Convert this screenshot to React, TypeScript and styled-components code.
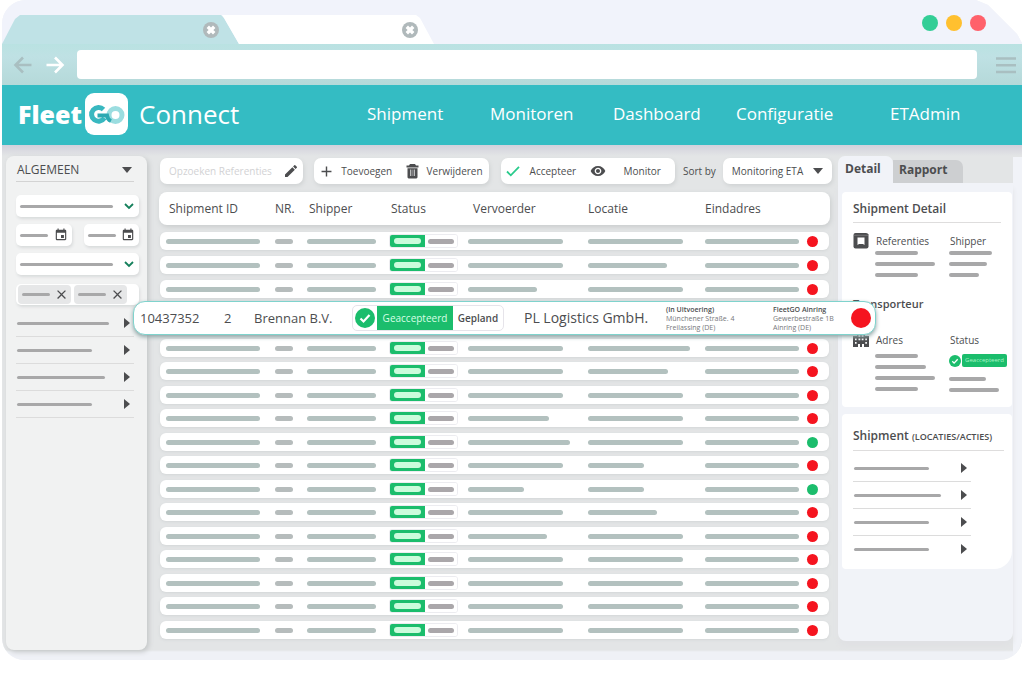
import React from "react";
import styled, { createGlobalStyle } from "styled-components";
import { MdAdd, MdClose, MdEdit, MdEvent, MdVisibility } from "react-icons/md";

const ink = "#4c4d4f";
const green = "#1bbd6c";
const teal = "#34bcc3";

const GlobalStyle = createGlobalStyle`
  *, *::before, *::after { box-sizing: border-box; }
  body { margin: 0; background: #fff; color: ${ink}; font-family: "Open Sans", "Noto Sans", sans-serif; }
  button, input, select { font: inherit; color: inherit; border: 0; padding: 0; margin: 0; background: none; }
  svg { display: block; flex: none; }
  a { color: inherit; text-decoration: none; }
`;

const Window = styled.div`
  margin: 0 2px 22px;
  background: #f1f3f8;
  border-radius: 24px 0 22px 22px;
  overflow: hidden;
  clip-path: polygon(0 0, calc(100% - 46px) 0, calc(100% - 34px) 5px, calc(100% - 5px) 34px, 100% 43px, 100% 100%, 0 100%);
`;

const TabStrip = styled.div`
  display: flex;
  align-items: flex-end;
  height: 44px;
  background: #f1f3fb;
`;

const BrowserTab = styled.div<{ $active?: boolean }>`
  display: flex;
  align-items: center;
  justify-content: flex-end;
  height: 29px;
  width: ${(p) => (p.$active ? 237 : 212)}px;
  margin-left: ${(p) => (p.$active ? 0 : -17)}px;
  padding-right: ${(p) => (p.$active ? 20 : 16)}px;
  background: ${(p) => (p.$active ? "#bfe2e6" : "#fff")};
  clip-path: ${(p) =>
    p.$active
      ? "polygon(0 100%, 13px 4px, 18px 0, calc(100% - 18px) 0, calc(100% - 15px) 3px, 100% 100%)"
      : "polygon(0 0, calc(100% - 18px) 0, calc(100% - 14px) 3px, 100% 100%, 17px 100%, 2px 3px)"};
`;

const PlainButton = styled.button`
  display: flex;
  align-items: center;
  cursor: pointer;
`;

const WindowDots = styled.div`
  display: flex;
  gap: 8px;
  margin: 0 36px 13px auto;
`;

const WindowDot = styled.button<{ $color: string }>`
  width: 16px;
  height: 16px;
  border-radius: 50%;
  background: ${(p) => p.$color};
`;

const AddressRow = styled.div`
  display: flex;
  align-items: center;
  height: 41px;
  padding: 0 6px 0 9px;
  gap: 8px;
  background: linear-gradient(#b9e2e2, #bfe1e4 30%, #b5d9d9);
`;

const Address = styled.input`
  flex: 1;
  height: 29px;
  min-width: 0;
  margin: 0 11px 0 2px;
  padding: 0 12px;
  border-radius: 4px;
  background: #fff;
`;

const Header = styled.header`
  display: flex;
  align-items: center;
  height: 60px;
  padding: 0 0 2px 16px;
  color: #fff;
  background: ${teal};
`;

const Brand = styled.a`
  display: flex;
  align-items: center;
  font-size: 26px;
  line-height: 32px;
`;

const BrandName = styled.span`
  width: 67px;
  font-size: 25px;
  font-weight: 800;
`;

const Product = styled.span`
  margin-left: 11px;
`;

const Nav = styled.nav`
  display: grid;
  flex: 1;
  grid-template-columns: 123fr 123fr 123fr 154fr 71fr;
  max-width: 594px;
  margin-left: auto;
  margin-right: 61px;
  font-size: 17px;
  line-height: 24px;
  white-space: nowrap;
`;

const Body = styled.div`
  display: grid;
  grid-template-columns: 145px minmax(0, 1fr) 184px;
  padding-bottom: 10px;
  background: linear-gradient(to right, transparent calc(100% - 9px), #f1f3f8 calc(100% - 9px)) 0 12px no-repeat,
    linear-gradient(#d2d1dc, #e3e5e6 11px, #e3e5e6 calc(100% - 10px), #eff1f6 calc(100% - 8px));
`;

const Sidebar = styled.aside`
  margin: 11px 0 0 4px;
  padding: 4px 8px 0 10px;
  border-radius: 8px;
  background: #f1f2f2;
  box-shadow: 2px 2px 5px #c4c7c8;
`;

const SectionToggle = styled.button`
  display: flex;
  align-items: center;
  justify-content: space-between;
  width: 118px;
  height: 22px;
  padding: 0 2px 1px 1px;
  border-bottom: 1px solid #d3d3d3;
  font-size: 12px;
  line-height: 18px;
`;

const Triangle = styled.span<{ $side?: boolean }>`
  flex: none;
  width: 0;
  height: 0;
  border: solid transparent;
  border-width: ${(p) => (p.$side ? "5px 0 5px 6px" : "6px 5px 0")};
  border-color: ${(p) => (p.$side ? `transparent transparent transparent ${ink}` : `${ink} transparent transparent`)};
`;

const Bar = styled.span<{ $w: number; $h?: number; $tone?: string }>`
  display: block;
  flex: none;
  width: ${(p) => p.$w}px;
  max-width: 100%;
  height: ${(p) => p.$h ?? 3}px;
  border-radius: 3px;
  background: ${(p) => p.$tone ?? "#a8a8a9"};
`;

const Filters = styled.div`
  display: grid;
  grid-template-columns: 1fr 1fr;
  gap: 7px 12px;
  margin-top: 13px;
`;

const Field = styled.button<{ $wide?: boolean }>`
  display: flex;
  align-items: center;
  justify-content: space-between;
  grid-column: ${(p) => (p.$wide ? "1 / -1" : "auto")};
  height: 22px;
  padding: 0 4px;
  border-radius: 5px;
  background: #fff;
  box-shadow: 1px 2px 3px #d9dbdc;
`;

const Chips = styled.div`
  display: flex;
  grid-column: 1 / -1;
  gap: 3px;
  height: 21px;
  margin-top: 2px;
  padding: 1px 2px;
  border-radius: 5px;
  background: #fff;
  box-shadow: 1px 2px 3px #d9dbdc;
`;

const Chip = styled.button`
  display: flex;
  align-items: center;
  justify-content: space-between;
  width: 53px;
  padding: 0 2px 0 4px;
  border-radius: 4px;
  background: #e6e7e8;
`;

const Fold = styled.button`
  display: flex;
  align-items: center;
  justify-content: space-between;
  width: 118px;
  height: 27px;
  padding: 0 4px 0 1px;
  border-bottom: 1px solid #dcdcdc;
`;

const Folds = styled.div<{ $open?: boolean }>`
  margin-top: ${(p) => (p.$open ? 4 : 5)}px;
  ${Fold}:last-child { border-bottom-color: ${(p) => (p.$open ? "transparent" : "#dcdcdc")}; }
`;

const Main = styled.main`
  padding: 13px 9px 6px 13px;
`;

const Toolbar = styled.div`
  display: grid;
  grid-template-columns: minmax(0, 154fr) minmax(0, 186fr) minmax(0, 182fr) auto minmax(0, 109fr);
  align-items: center;
  height: 26px;
  margin-right: -3px;
  font-size: 10px;
  line-height: 16px;
`;

const Panel = styled.div<{ $gap?: number; $end?: number }>`
  display: flex;
  align-items: center;
  justify-content: space-between;
  height: 26px;
  margin-right: ${(p) => p.$gap ?? 0}px;
  padding: 0 ${(p) => p.$end ?? 6}px 0 4px;
  border-radius: 7px;
  background: #fff;
  box-shadow: 1px 2px 4px #cfd2d3;
`;

const Search = styled.input`
  flex: 1;
  min-width: 0;
  padding-left: 5px;
  &::placeholder { color: #d2d2d4; opacity: 1; }
`;

const Tool = styled.button<{ $gap: number }>`
  display: flex;
  align-items: center;
  gap: ${(p) => p.$gap}px;
  white-space: nowrap;
`;

const SortLabel = styled.label`
  margin-right: 7px;
  font-weight: 500;
  white-space: nowrap;
`;

const SortSelect = styled.select`
  flex: 1;
  min-width: 0;
  padding-left: 5px;
  appearance: none;
`;

const Table = styled.table`
  display: block;
  margin-top: 8px;
`;

const Head = styled.thead`
  display: block;
`;

const TableBody = styled.tbody`
  display: block;
`;

const columns = "109fr 32fr 82fr 79fr 120fr 117fr 102fr 18fr";

const HeadRow = styled.tr`
  display: grid;
  grid-template-columns: ${columns};
  align-items: center;
  height: 33px;
  margin: 0 -1px 7px;
  padding: 0 5px 0 7px;
  border-radius: 8px;
  background: #fff;
  box-shadow: 1px 2px 5px #c9cccd;
`;

const HeadCell = styled.th<{ $pad?: number }>`
  padding: 0 0 0 ${(p) => p.$pad ?? 0}px;
  font-size: 12px;
  line-height: 18px;
  font-weight: 500;
  text-align: left;
  white-space: nowrap;
`;

const Row = styled.tr`
  display: grid;
  grid-template-columns: ${columns};
  align-items: center;
  height: 18px;
  margin-bottom: 6px;
  padding: 0 4px 0 6px;
  border-radius: 6px;
  background: #fff;
  box-shadow: 0 1px 3px #d3d6d7;
  ${TableBody}:last-child &:nth-child(odd) { margin-bottom: 5px; }
`;

const Cell = styled.td`
  padding: 0;
`;

const StatusPair = styled.div`
  display: flex;
  width: 69px;
  height: 14px;
  border: 1px solid #ececf0;
  border-radius: 3px;
  overflow: hidden;
`;

const StatusHalf = styled.span<{ $on?: boolean }>`
  display: flex;
  align-items: center;
  justify-content: center;
  width: ${(p) => (p.$on ? 35 : 32)}px;
  background: ${(p) => (p.$on ? green : "#fff")};
`;

const Dot = styled.span<{ $ok?: boolean; $big?: boolean }>`
  display: block;
  width: ${(p) => (p.$big ? 20 : 11)}px;
  height: ${(p) => (p.$big ? 20 : 11)}px;
  border-radius: 50%;
  background: ${(p) => (p.$ok ? green : "#f5141f")};
`;

const ActiveRow = styled.tr`
  position: relative;
  z-index: 2;
  display: grid;
  grid-template-columns: 84fr 30fr 98fr 172fr 142fr 107fr 78fr 20fr;
  align-items: center;
  height: 34px;
  margin: -3px -47px 4px -27px;
  padding: 0 4px 0 6px;
  border: 1px solid #7fd3cd;
  border-radius: 12px;
  background: #fff;
  box-shadow: 0 2px 4px #8fa5a6;
`;

const ActiveCell = styled.td<{ $size?: number }>`
  padding: 0;
  font-size: ${(p) => p.$size ?? 13}px;
  line-height: 20px;
  font-weight: 500;
  white-space: nowrap;
`;

const Lines = styled.div`
  font-size: 7px;
  line-height: 9px;
  font-weight: 400;
  color: #77787b;
`;

const Strong = styled.strong`
  display: block;
  font-weight: 600;
  color: ${ink};
`;

const StatusPill = styled.div`
  display: flex;
  align-items: center;
  width: 152px;
  height: 26px;
  padding-left: 2px;
  border: 1px solid #e6e4ea;
  border-radius: 5px;
  font-size: 10px;
  font-weight: 600;
`;

const Accepted = styled.span`
  width: 76px;
  height: 24px;
  margin-left: 2px;
  line-height: 24px;
  text-align: center;
  font-weight: 500;
  color: #d9ffe6;
  background: ${green};
`;

const Planned = styled.span`
  flex: 1;
  text-align: center;
`;

const Details = styled.aside`
  display: flex;
  flex-direction: column;
  margin: 11px 9px 9px 0;
`;

const Tabs = styled.div`
  display: flex;
  align-items: flex-end;
  height: 27px;
`;

const Tab = styled.button<{ $active?: boolean }>`
  width: ${(p) => (p.$active ? 55 : 70)}px;
  height: ${(p) => (p.$active ? 27 : 23)}px;
  padding: 0 0 ${(p) => (p.$active ? 1 : 3)}px ${(p) => (p.$active ? 7 : 6)}px;
  border-radius: ${(p) => (p.$active ? "7px 7px 0 0" : "0 7px 0 0")};
  font-size: 12px;
  line-height: 18px;
  font-weight: 700;
  text-align: left;
  background: ${(p) => (p.$active ? "#f1f3f8" : "#cdcfd1")};
`;

const DetailBody = styled.div`
  flex: 1;
  padding: 9px 1px 0 4px;
  border-radius: 0 0 8px 8px;
  background: #f1f3f8;
  box-shadow: 0 6px 5px #e0e1e4;
`;

const Card = styled.section<{ $round?: boolean }>`
  height: ${(p) => (p.$round ? 155 : 215)}px;
  margin-bottom: 7px;
  padding: ${(p) => (p.$round ? "13px 8px 0 11px" : "8px 11px 0 11px")};
  border-radius: ${(p) => (p.$round ? "4px 4px 18px 4px" : "4px")};
  background: #fff;
`;

const CardTitle = styled.h2`
  margin: 0;
  padding-bottom: 4px;
  border-bottom: 1px solid #dedddd;
  font-size: 12px;
  line-height: 18px;
  font-weight: 600;
  white-space: nowrap;
`;

const Small = styled.small`
  font-size: 9px;
`;

const Carrier = styled.h3`
  margin: 18px 0 19px;
  font-size: 11px;
  line-height: 18px;
  font-weight: 600;
`;

const Facts = styled.div`
  display: grid;
  grid-template-columns: 22px 74px 1fr;
  margin-top: 10px;
`;

const Fact = styled.div`
  display: flex;
  flex-direction: column;
  gap: 7px;
`;

const FactTitle = styled.h4<{ $tight?: boolean }>`
  margin: 0 0 ${(p) => (p.$tight ? -5 : -1)}px 1px;
  font-size: 10px;
  line-height: 16px;
  font-weight: 500;
`;

const MiniStatus = styled.div`
  display: flex;
  align-items: center;
  gap: 1px;
  height: 13px;
  margin-bottom: 3px;
`;

const MiniText = styled.span`
  width: 45px;
  height: 13px;
  border-radius: 2px;
  font-size: 6px;
  line-height: 13px;
  text-align: center;
  color: #a9f5c6;
  background: ${green};
`;

const BookIcon = () => (
  <svg width="16" height="16" viewBox="0 0 16 16" aria-hidden="true">
    <path d="M2.500 0H13q2 0 2.500 1.500V13.500q0 2-2 2h-11Q0.500 15.500 0.500 13.500V2Q.5 0 2.500 0Z" fill={ink} />
    <path d="M4.500 4.500h7v7.500L10 11H6L4.500 12Z" fill="#fff" />
    <path d="M1 2.300h14" stroke="#96979a" strokeWidth=".5" />
  </svg>
);

const BuildingIcon = () => (
  <svg width="16" height="16" viewBox="0 0 16 16" aria-hidden="true">
    <path d="M0 4h4V1h2V0h1v1h2V0h1v1h2v3h4v11h-5v-3H9v3H7v-3H5v3H0Z" fill={ink} />
    <path d="M2 6.500h1.600v1.700H2zM2 10h1.600v1.700H2zM5.500 3h1.800v1.700H5.500zM8.700 3h1.800v1.700H8.700zM5.500 6.500h1.800v1.700H5.500zM8.700 6.500h1.800v1.700H8.700zM12.300 6.500h1.600v1.700h-1.600zM12.300 10h1.600v1.700h-1.600z" fill="#fff" />
  </svg>
);

const TrashIcon = () => (
  <svg width="13" height="15" viewBox="0 0 13 15" aria-hidden="true">
    <path d="M4 0h5l1 1.500h2.500V3.500H.5V1.500H3ZM1.500 4.300h10V13.500L10.500 14.500H2.500L1.500 13.500Z" fill={ink} />
    <path d="M4.700 5.500v6.500M8.300 5.500v6.500" stroke="#c9cacb" strokeWidth="1.200" />
    <path d="M6.500 5.500v6.500" stroke="#8b8c8e" strokeWidth=".8" />
  </svg>
);

const ArrowIcon = ({ back }: { back?: boolean }) => (
  <svg width="24" height="24" viewBox="0 0 24 24" fill="none" stroke={back ? "#a9bfc1" : "#fff"} strokeWidth="2.600" aria-hidden="true">
    <path d={back ? "M20.500 12H4.500M12 4.500L4.500 12l7.500 7.500" : "M3.500 12h16M12 4.500l7.500 7.500-7.500 7.500"} />
  </svg>
);

const TickIcon = () => (
  <svg width="16" height="16" viewBox="0 0 16 16" aria-hidden="true">
    <path d="M2 8.500l3.800 3.800L14 3.800" fill="none" stroke="#29cb8c" strokeWidth="1.800" />
  </svg>
);

const ChevronIcon = () => (
  <svg width="12" height="12" viewBox="0 0 12 12" aria-hidden="true">
    <path d="M2 4l4 4 4-4" fill="none" stroke="#15805c" strokeWidth="1.800" />
  </svg>
);

const CloseBadge = () => (
  <svg width="16" height="16" viewBox="0 0 16 16" aria-hidden="true">
    <circle cx="8" cy="8" r="8" fill="#b0b9bb" />
    <path d="M4.800 4.800l6.400 6.400M11.200 4.800l-6.400 6.400" stroke="#fff" strokeWidth="3.400" />
  </svg>
);

const CheckBadge = ({ size }: { size: number }) => (
  <svg width={size} height={size} viewBox="0 0 20 20" aria-hidden="true">
    <circle cx="10" cy="10" r="10" fill={green} />
    <path d="M5.500 10.500l3 3 6-6.500" fill="none" stroke="#fff" strokeWidth="2.200" />
  </svg>
);

const GoMark = () => (
  <svg width="43" height="42" viewBox="0 0 43 42" aria-hidden="true">
    <rect width="43" height="42" rx="9" fill="#fff" />
    <circle cx="30.500" cy="22" r="6.500" fill="none" stroke="#9bdde0" strokeWidth="5" />
    <path d="M18.500 16.500A7 6.800 0 1 0 19.500 25" fill="none" stroke="#38b8c0" strokeWidth="5" />
    <path d="M12.500 22.500H22q.5 4 4 5.500" fill="none" stroke="#2da9b2" strokeWidth="4" />
  </svg>
);

const MenuIcon = () => (
  <svg width="20" height="18" viewBox="0 0 20 18" aria-hidden="true">
    <path d="M0 2.500h20M0 9.300h20M0 16h20" stroke="#a9bfc1" strokeWidth="2.600" />
  </svg>
);

interface Shipment {
  carrier: number;
  place: number;
  ok?: boolean;
}

const before: Shipment[] = [
  { carrier: 95, place: 95 },
  { carrier: 95, place: 79 },
  { carrier: 69, place: 95 },
];

const after: Shipment[] = [
  { carrier: 95, place: 102 },
  { carrier: 95, place: 80 },
  { carrier: 95, place: 95 },
  { carrier: 81, place: 95 },
  { carrier: 102, place: 95, ok: true },
  { carrier: 95, place: 56 },
  { carrier: 56, place: 56, ok: true },
  { carrier: 95, place: 69 },
  { carrier: 79, place: 95 },
  { carrier: 95, place: 95 },
  { carrier: 95, place: 95 },
  { carrier: 95, place: 95 },
  { carrier: 95, place: 95 },
];

const sage = "#b3c1bf";

const ShipmentRow = ({ carrier, place, ok }: Shipment) => (
  <Row>
    <Cell><Bar $w={94} $h={5} $tone={sage} /></Cell>
    <Cell><Bar $w={18} $h={5} $tone="#b6bcbc" /></Cell>
    <Cell><Bar $w={69} $h={5} $tone={sage} /></Cell>
    <Cell>
      <StatusPair>
        <StatusHalf $on><Bar $w={27} $h={6} $tone="#cbfcdc" /></StatusHalf>
        <StatusHalf><Bar $w={26} $h={5} $tone="#aaa7aa" /></StatusHalf>
      </StatusPair>
    </Cell>
    <Cell><Bar $w={carrier} $h={5} $tone={sage} /></Cell>
    <Cell><Bar $w={place} $h={5} $tone={sage} /></Cell>
    <Cell><Bar $w={94} $h={5} $tone={sage} /></Cell>
    <Cell><Dot $ok={ok} /></Cell>
  </Row>
);

export default function App() {
  return (
    <>
      <GlobalStyle />
      <Window>
        <TabStrip>
          <BrowserTab $active><PlainButton aria-label="Close tab"><CloseBadge /></PlainButton></BrowserTab>
          <BrowserTab><PlainButton aria-label="Close tab"><CloseBadge /></PlainButton></BrowserTab>
          <WindowDots>
            <WindowDot $color="#33ce96" aria-label="Minimize" />
            <WindowDot $color="#ffc02f" aria-label="Maximize" />
            <WindowDot $color="#ff616b" aria-label="Close" />
          </WindowDots>
        </TabStrip>
        <AddressRow>
          <PlainButton aria-label="Back"><ArrowIcon back /></PlainButton>
          <PlainButton aria-label="Forward"><ArrowIcon /></PlainButton>
          <Address aria-label="Address" />
          <PlainButton aria-label="Menu"><MenuIcon /></PlainButton>
        </AddressRow>
        <Header>
          <Brand href="#">
            <BrandName>Fleet</BrandName>
            <GoMark />
            <Product>Connect</Product>
          </Brand>
          <Nav>
            <a href="#shipment">Shipment</a>
            <a href="#monitoren">Monitoren</a>
            <a href="#dashboard">Dashboard</a>
            <a href="#configuratie">Configuratie</a>
            <a href="#etadmin">ETAdmin</a>
          </Nav>
        </Header>
        <Body>
          <Sidebar>
            <SectionToggle>ALGEMEEN<Triangle /></SectionToggle>
            <Filters>
              <Field $wide aria-label="Filter"><Bar $w={93} /><ChevronIcon /></Field>
              <Field aria-label="From"><Bar $w={28} /><MdEvent size={14} color={ink} /></Field>
              <Field aria-label="To"><Bar $w={28} /><MdEvent size={14} color={ink} /></Field>
              <Field $wide aria-label="Filter"><Bar $w={93} /><ChevronIcon /></Field>
              <Chips>
                <Chip aria-label="Remove"><Bar $w={28} /><MdClose size={15} color={ink} /></Chip>
                <Chip aria-label="Remove"><Bar $w={28} /><MdClose size={15} color={ink} /></Chip>
              </Chips>
            </Filters>
            <Folds>
              {[92, 75, 88, 75].map((w, i) => (
                <Fold key={i} aria-label="Expand"><Bar $w={w} /><Triangle $side /></Fold>
              ))}
            </Folds>
          </Sidebar>
          <Main>
            <Toolbar>
              <Panel $gap={11} $end={4}>
                <Search aria-label="Opzoeken Referenties" placeholder="Opzoeken Referenties" />
                <MdEdit size={16} color={ink} />
              </Panel>
              <Panel $gap={12}>
                <Tool $gap={6}><MdAdd size={17} color={ink} />Toevoegen</Tool>
                <Tool $gap={8}><TrashIcon />Verwijderen</Tool>
              </Panel>
              <Panel $gap={8} $end={14}>
                <Tool $gap={9}><TickIcon />Accepteer</Tool>
                <Tool $gap={18}><MdVisibility size={16} color={ink} />Monitor</Tool>
              </Panel>
              <SortLabel htmlFor="sort">Sort by</SortLabel>
              <Panel $end={9}>
                <SortSelect id="sort"><option>Monitoring ETA</option></SortSelect>
                <Triangle />
              </Panel>
            </Toolbar>
            <Table>
              <Head>
                <HeadRow>
                  <HeadCell $pad={3}>Shipment ID</HeadCell>
                  <HeadCell>NR.</HeadCell>
                  <HeadCell $pad={2}>Shipper</HeadCell>
                  <HeadCell $pad={2}>Status</HeadCell>
                  <HeadCell $pad={5}>Vervoerder</HeadCell>
                  <HeadCell>Locatie</HeadCell>
                  <HeadCell>Eindadres</HeadCell>
                </HeadRow>
              </Head>
              <TableBody>
                {before.map((s, i) => <ShipmentRow key={i} {...s} />)}
                <ActiveRow>
                  <ActiveCell>10437352</ActiveCell>
                  <ActiveCell>2</ActiveCell>
                  <ActiveCell>Brennan B.V.</ActiveCell>
                  <ActiveCell>
                    <StatusPill>
                      <CheckBadge size={20} />
                      <Accepted>Geaccepteerd</Accepted>
                      <Planned>Gepland</Planned>
                    </StatusPill>
                  </ActiveCell>
                  <ActiveCell $size={14}>PL Logistics GmbH.</ActiveCell>
                  <ActiveCell><Lines><Strong>(In Uitvoering)</Strong>Münchener Straße. 4<br />Freilassing (DE)</Lines></ActiveCell>
                  <ActiveCell><Lines><Strong>FleetGO Ainring</Strong>Gewerbestraße 1B<br />Ainring (DE)</Lines></ActiveCell>
                  <ActiveCell><Dot $big /></ActiveCell>
                </ActiveRow>
              </TableBody>
              <TableBody>
                {after.map((s, i) => <ShipmentRow key={i} {...s} />)}
              </TableBody>
            </Table>
          </Main>
          <Details>
            <Tabs>
              <Tab $active>Detail</Tab>
              <Tab>Rapport</Tab>
            </Tabs>
            <DetailBody>
              <Card>
                <CardTitle>Shipment Detail</CardTitle>
                <Facts>
                  <BookIcon />
                  <Fact>
                    <FactTitle $tight>Referenties</FactTitle>
                    <Bar $w={43} $h={4} /><Bar $w={60} $h={4} /><Bar $w={43} $h={4} />
                  </Fact>
                  <Fact>
                    <FactTitle $tight>Shipper</FactTitle>
                    <Bar $w={43} $h={4} /><Bar $w={38} $h={4} /><Bar $w={30} $h={4} />
                  </Fact>
                </Facts>
                <Carrier>Transporteur</Carrier>
                <Facts>
                  <BuildingIcon />
                  <Fact>
                    <FactTitle>Adres</FactTitle>
                    <Bar $w={43} $h={4} /><Bar $w={51} $h={4} /><Bar $w={60} $h={4} /><Bar $w={43} $h={4} />
                  </Fact>
                  <Fact>
                    <FactTitle>Status</FactTitle>
                    <MiniStatus><CheckBadge size={12} /><MiniText>Geaccepteerd</MiniText></MiniStatus>
                    <Bar $w={37} $h={4} /><Bar $w={50} $h={4} />
                  </Fact>
                </Facts>
              </Card>
              <Card $round>
                <CardTitle>Shipment <Small>(LOCATIES/ACTIES)</Small></CardTitle>
                <Folds $open>
                  {[75, 87, 75, 75].map((w, i) => (
                    <Fold key={i} aria-label="Expand"><Bar $w={w} /><Triangle $side /></Fold>
                  ))}
                </Folds>
              </Card>
            </DetailBody>
          </Details>
        </Body>
      </Window>
    </>
  );
}
